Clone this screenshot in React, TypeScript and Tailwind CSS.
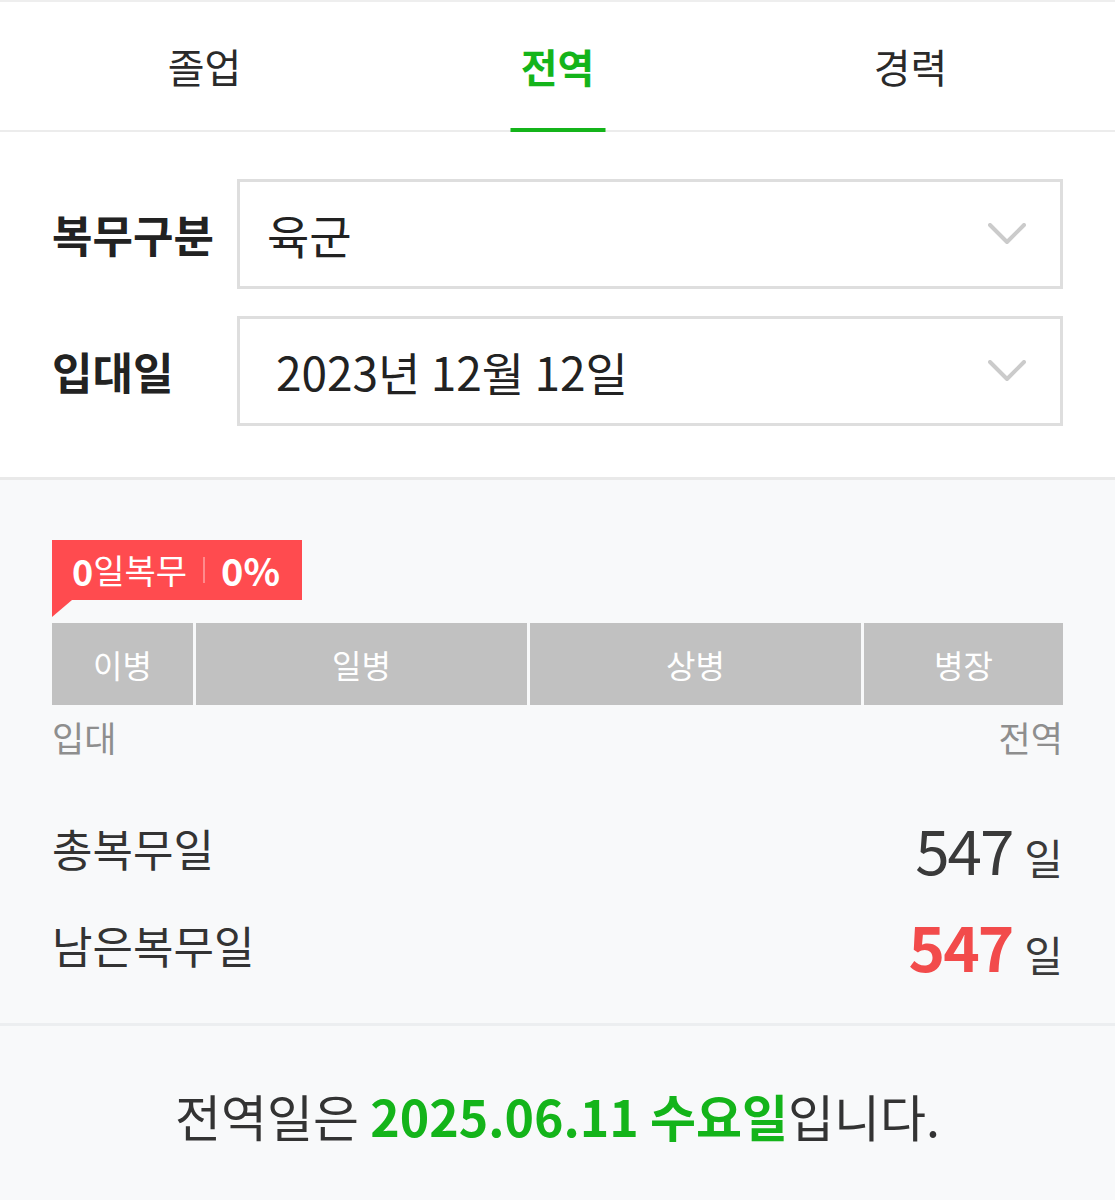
import React, { useState } from 'react';

const FONT = '"Noto Sans CJK KR", "Noto Sans", sans-serif';

const TABS = ['졸업', '전역', '경력'];

const RANKS = [
  { name: '이병', width: 'w-[141px]' },
  { name: '일병', width: 'w-[331px]' },
  { name: '상병', width: 'w-[331px]' },
  { name: '병장', width: 'flex-1' },
];

function Chevron() {
  return (
    <svg width="38" height="22" viewBox="0 0 38 22" fill="none" className="shrink-0">
      <path d="M2 2 L19 19 L36 2" stroke="#cbcbcb" strokeWidth="4" strokeLinecap="round" strokeLinejoin="round" />
    </svg>
  );
}

function SelectRow({ label, value, padClass }: { label: string; value: string; padClass: string }) {
  return (
    <div className="flex items-center">
      <div className="w-[185px] shrink-0 text-[44px] font-bold text-[#222] leading-none">{label}</div>
      <div className={`flex-1 h-[110px] border-[3px] border-[#dedede] bg-white flex items-center justify-between pr-[34px] ${padClass}`}>
        <span className="text-[46px] text-[#222] leading-none">{value}</span>
        <Chevron />
      </div>
    </div>
  );
}

export default function App() {
  const [tab, setTab] = useState(1);

  return (
    <div className="w-[1115px] h-[1200px] bg-[#f8f9fa] overflow-hidden" style={{ fontFamily: FONT }}>
      {/* tab bar */}
      <div className="bg-white border-t-2 border-[#eeeeee] border-b-2 border-b-[#ececec] px-[28px] grid grid-cols-3 h-[132px]">
        {TABS.map((t, i) => (
          <button
            key={t}
            onClick={() => setTab(i)}
            className="relative flex items-center justify-center h-[128px]"
          >
            <span
              className={`text-[40px] leading-none ${i === tab ? 'font-bold text-[#14b41a]' : 'text-[#2a2a2a]'}`}
            >
              {t}
            </span>
            {i === tab && (
              <span className="absolute left-1/2 -translate-x-1/2 bottom-[-2px] w-[95px] h-[4px] bg-[#14b41a]" />
            )}
          </button>
        ))}
      </div>

      {/* service type / enlistment date */}
      <div className="bg-white border-b-[3px] border-[#e9e9e9] pl-[52px] pr-[52px] pt-[47px] pb-[51px] flex flex-col gap-[27px]">
        <SelectRow label="복무구분" value="육군" padClass="pl-[27px]" />
        <SelectRow label="입대일" value="2023년 12월 12일" padClass="pl-[36px]" />
      </div>

      {/* progress */}
      <div className="px-[52px] pt-[60px] h-[546px] border-b-[3px] border-[#eceef0]">
        <div className="relative inline-flex items-center h-[60px] pl-[20px] pr-[22px] bg-[#ff4b4f] text-white text-[34px] leading-none">
          <span className="font-bold text-[36px]">0</span>
          <span>일복무</span>
          <span className="mx-[16px] w-[2px] h-[26px] bg-[#ff8a8c]" />
          <span className="font-bold text-[38px]">0%</span>
          <svg className="absolute left-0 top-[60px]" width="20" height="17" viewBox="0 0 20 17">
            <path d="M0 0 H20 L0 17 Z" fill="#ff4b4f" />
          </svg>
        </div>

        <div className="mt-[23px] flex gap-[3px] h-[82px]">
          {RANKS.map((r) => (
            <div
              key={r.name}
              className={`${r.width} bg-[#c1c1c1] flex items-center justify-center text-white text-[32px] leading-none`}
            >
              {r.name}
            </div>
          ))}
        </div>

        <div className="flex justify-between mt-[14px] text-[35px] text-[#8e8e8e] leading-none">
          <span>입대</span>
          <span>전역</span>
        </div>

        <div className="mt-[64px] flex items-center justify-between h-[60px]">
          <span className="text-[44px] text-[#333] leading-none">총복무일</span>
          <span className="flex items-baseline gap-[12px] text-[#3a3a3a]">
            <span className="text-[62px] tracking-[-2px] leading-none">547</span>
            <span className="text-[42px] leading-none">일</span>
          </span>
        </div>

        <div className="mt-[37px] flex items-center justify-between h-[60px]">
          <span className="text-[44px] text-[#333] leading-none">남은복무일</span>
          <span className="flex items-baseline gap-[12px]">
            <span className="text-[62px] font-bold tracking-[-2px] text-[#f24b4b] leading-none">547</span>
            <span className="text-[42px] text-[#3a3a3a] leading-none">일</span>
          </span>
        </div>
      </div>

      {/* discharge date */}
      <div className="pt-[64px] text-center text-[50px] text-[#333] leading-none">
        전역일은{' '}
        <span className="font-bold text-[#14b41a]">2025.06.11 수요일</span>
        입니다.
      </div>
    </div>
  );
}
